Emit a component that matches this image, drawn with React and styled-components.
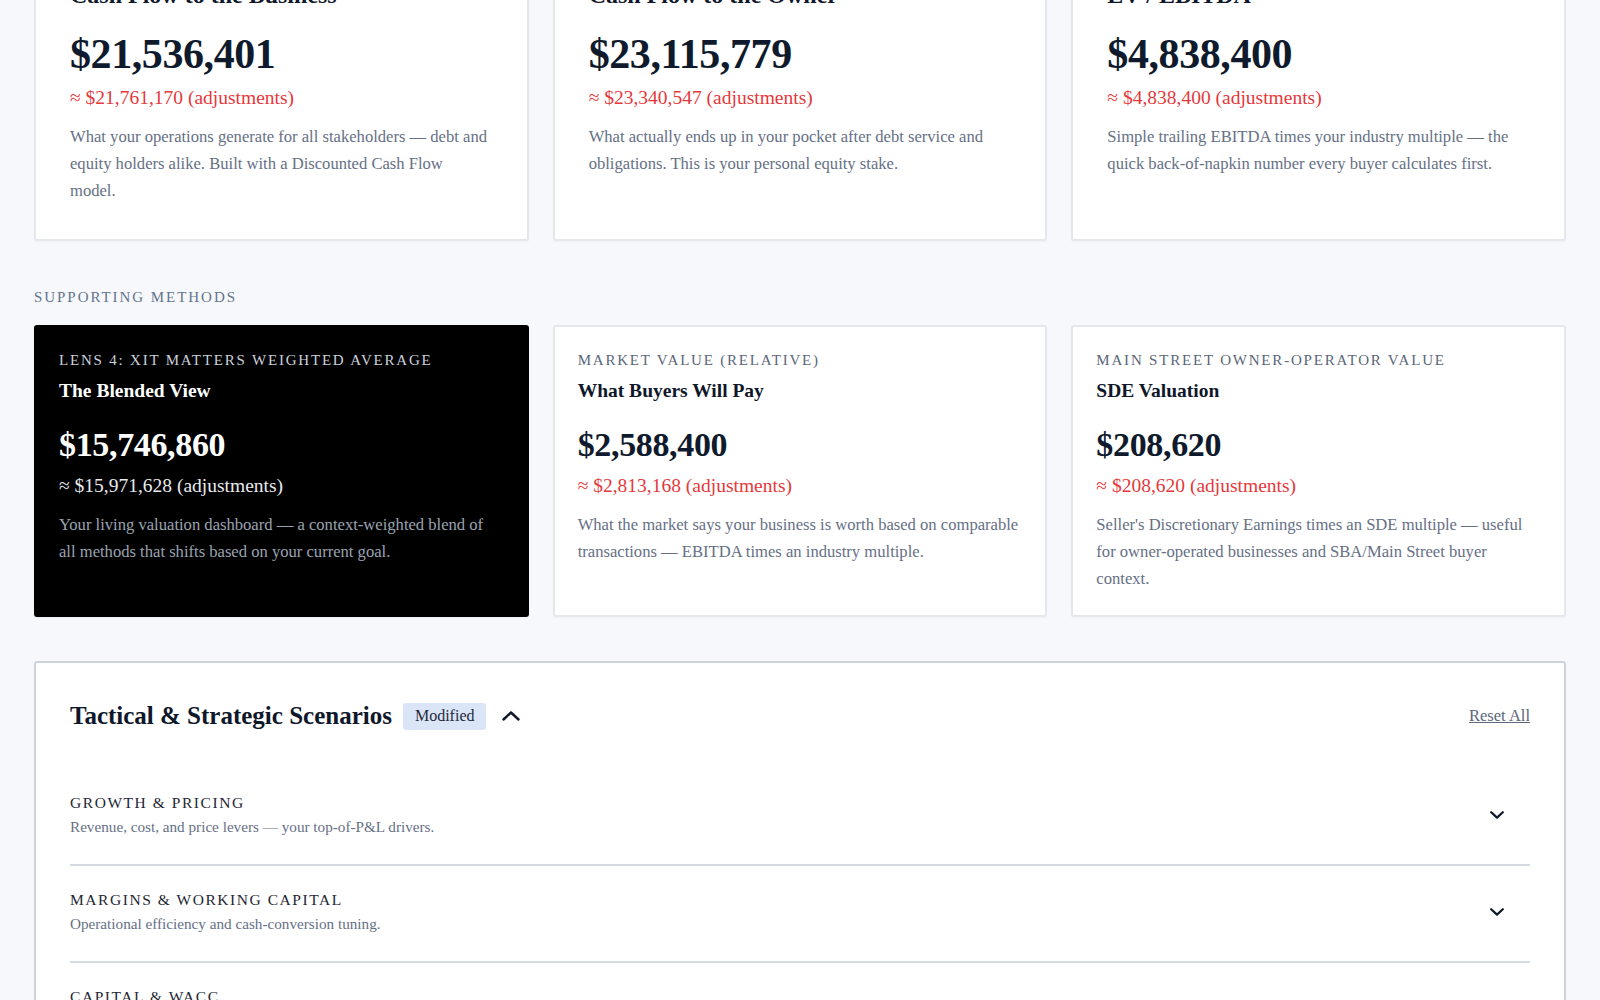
import { useLayoutEffect, useRef } from "react";
import styled, { createGlobalStyle } from "styled-components";

const GlobalStyle = createGlobalStyle`
  * { box-sizing: border-box; }
  html, body { margin: 0; padding: 0; background: #f6f8fc; }
  body { font-family: "Liberation Serif", "Times New Roman", serif; color: #0f172a; }
`;

// SCROLL SHELL
const Scroller = styled.div`
  position: relative;
  height: 100vh;
  overflow-y: auto;
  background: #f6f8fc;
  scrollbar-width: none;
  &::-webkit-scrollbar { display: none; }
`;
const Page = styled.main`
  display: flex;
  flex-direction: column;
  padding: 40px 34px 80px;
`;
const PageTitle = styled.h1`
  margin: 0 0 8px;
  font-size: 32px;
  font-weight: 700;
  color: #0f172a;
`;
const SectionLabel = styled.div`
  font-size: 15px;
  line-height: 20px;
  letter-spacing: 0.13em;
  text-transform: uppercase;
  color: #64748b;
  margin: ${(p) => p.$top || 0}px 0 18px;
`;
const Grid = styled.div`
  display: grid;
  grid-template-columns: repeat(3, 1fr);
  gap: 24px;
`;

// CARDS
const Card = styled.div`
  display: flex;
  flex-direction: column;
  background: ${(p) => (p.$dark ? "#000" : "#fff")};
  border: 2px solid ${(p) => (p.$dark ? "#000" : "#e4e7ec")};
  border-radius: 3px;
  padding: ${(p) => (p.$primary ? "33px 36.5px 35px 34px" : "23px 23px 23px")};
  box-shadow: 0 1px 2px rgba(15, 23, 42, 0.04);
`;
const Eyebrow = styled.div`
  font-size: 15px;
  line-height: 20px;
  letter-spacing: 0.12em;
  text-transform: uppercase;
  color: ${(p) => (p.$dark ? "#cbd2dc" : "#5b6678")};
`;
const CardTitle = styled.div`
  margin-top: ${(p) => (p.$primary ? "6px" : "8px")};
  font-size: ${(p) => (p.$primary ? "24px" : "19.5px")};
  line-height: ${(p) => (p.$primary ? "31px" : "26px")};
  font-weight: 700;
  color: ${(p) => (p.$dark ? "#fff" : "#0f172a")};
`;
const BigNumber = styled.div`
  margin-top: ${(p) => (p.$primary ? "18px" : "20px")};
  font-size: ${(p) => (p.$primary ? "42px" : "34px")};
  line-height: ${(p) => (p.$primary ? "50px" : "41px")};
  font-weight: 700;
  letter-spacing: -0.01em;
  color: ${(p) => (p.$dark ? "#fff" : "#0f1b2d")};
`;
const Adjusted = styled.div`
  margin-top: ${(p) => (p.$primary ? "6px" : "8px")};
  font-size: 19.5px;
  line-height: 26px;
  color: ${(p) => (p.$dark ? "#e8eaee" : "#e5383b")};
`;
const Description = styled.p`
  margin: 12px 0 0;
  font-size: 16.6px;
  line-height: 27px;
  color: ${(p) => (p.$dark ? "#9aa3b1" : "#667085")};
`;

// SCENARIOS
const Panel = styled.section`
  margin-top: 44px;
  background: #fff;
  border: 2px solid #cdd3db;
  border-radius: 3px;
  padding: 37px 34px 20px 34px;
`;
const PanelHeader = styled.div`
  display: flex;
  align-items: center;
  height: 32px;
`;
const PanelTitle = styled.h2`
  margin: 0;
  font-size: 25px;
  font-weight: 700;
  color: #0f172a;
`;
const Badge = styled.span`
  display: inline-flex;
  align-items: center;
  height: 27px;
  margin-left: 11px;
  padding: 0 12px;
  border-radius: 3px;
  background: #dbe5f8;
  font-size: 16px;
  color: #1f2937;
`;
const ToggleButton = styled.button`
  display: inline-flex;
  align-items: center;
  margin-left: 16px;
  padding: 0;
  border: 0;
  background: none;
  color: #0f172a;
  cursor: pointer;
`;
const ResetLink = styled.a`
  margin-left: auto;
  font-size: 16.5px;
  color: #5b6678;
  text-decoration: underline;
  cursor: pointer;
`;
const GroupList = styled.div`
  margin-top: 37px;
  display: flex;
  flex-direction: column;
`;
const GroupRow = styled.div`
  display: flex;
  align-items: center;
  padding: 24px 0 27px;
  border-bottom: 2px solid #d5dae1;
`;
const GroupText = styled.div`
  flex: 1;
`;
const GroupName = styled.div`
  font-size: 15.5px;
  line-height: 20px;
  letter-spacing: 0.1em;
  text-transform: uppercase;
  color: #1e2633;
`;
const GroupHint = styled.div`
  margin-top: 4px;
  font-size: 15.2px;
  line-height: 20px;
  color: #667085;
`;
const Chevron = styled.span`
  display: inline-flex;
  margin-right: 26px;
  color: #0f172a;
`;

const ChevronUpIcon = () => (
  <svg width="18" height="10" viewBox="0 0 18 10" fill="none">
    <polyline points="1.5,8.5 9,1.5 16.5,8.5" stroke="currentColor" strokeWidth="2.4" strokeLinecap="round" strokeLinejoin="round" />
  </svg>
);
const ChevronDownIcon = () => (
  <svg width="14" height="8" viewBox="0 0 14 8" fill="none">
    <polyline points="1.2,1.2 7,6.6 12.8,1.2" stroke="currentColor" strokeWidth="2.2" strokeLinecap="round" strokeLinejoin="round" />
  </svg>
);

const primaryLenses = [
  {
    eyebrow: "Lens 1: Intrinsic Value (DCF)",
    title: "Cash Flow to the Business",
    value: "$21,536,401",
    adjusted: "≈ $21,761,170 (adjustments)",
    text: "What your operations generate for all stakeholders — debt and equity holders alike. Built with a Discounted Cash Flow model.",
  },
  {
    eyebrow: "Lens 2: Equity Value",
    title: "Cash Flow to the Owner",
    value: "$23,115,779",
    adjusted: "≈ $23,340,547 (adjustments)",
    text: "What actually ends up in your pocket after debt service and obligations. This is your personal equity stake.",
  },
  {
    eyebrow: "Lens 3: Quick Multiple",
    title: "EV / EBITDA",
    value: "$4,838,400",
    adjusted: "≈ $4,838,400 (adjustments)",
    text: "Simple trailing EBITDA times your industry multiple — the quick back-of-napkin number every buyer calculates first.",
  },
];

const supportingMethods = [
  {
    dark: true,
    eyebrow: "Lens 4: XIT Matters Weighted Average",
    title: "The Blended View",
    value: "$15,746,860",
    adjusted: "≈ $15,971,628 (adjustments)",
    text: "Your living valuation dashboard — a context-weighted blend of all methods that shifts based on your current goal.",
  },
  {
    eyebrow: "Market Value (Relative)",
    title: "What Buyers Will Pay",
    value: "$2,588,400",
    adjusted: "≈ $2,813,168 (adjustments)",
    text: "What the market says your business is worth based on comparable transactions — EBITDA times an industry multiple.",
  },
  {
    eyebrow: "Main Street Owner-Operator Value",
    title: "SDE Valuation",
    value: "$208,620",
    adjusted: "≈ $208,620 (adjustments)",
    text: "Seller's Discretionary Earnings times an SDE multiple — useful for owner-operated businesses and SBA/Main Street buyer context.",
  },
];

const scenarioGroups = [
  { name: "Growth & Pricing", hint: "Revenue, cost, and price levers — your top-of-P&L drivers." },
  { name: "Margins & Working Capital", hint: "Operational efficiency and cash-conversion tuning." },
  { name: "Capital & WACC", hint: "Discount rate, leverage and cost-of-capital assumptions." },
  { name: "Exit & Deal Structure", hint: "Timing, earn-outs and terms that shape what you take home." },
];

const ValuationCard = ({ item, primary }) => (
  <Card $dark={item.dark} $primary={primary}>
    <Eyebrow $dark={item.dark}>{item.eyebrow}</Eyebrow>
    <CardTitle $dark={item.dark} $primary={primary}>{item.title}</CardTitle>
    <BigNumber $dark={item.dark} $primary={primary}>{item.value}</BigNumber>
    <Adjusted $dark={item.dark} $primary={primary}>{item.adjusted}</Adjusted>
    <Description $dark={item.dark}>{item.text}</Description>
  </Card>
);

const App = () => {
  const scrollerRef = useRef(null);
  const lensesRef = useRef(null);

  // page is viewed scrolled down so the primary lens titles sit at the top edge
  useLayoutEffect(() => {
    if (scrollerRef.current && lensesRef.current) {
      scrollerRef.current.scrollTop = lensesRef.current.offsetTop + 81;
    }
  }, []);

  return (
    <Scroller ref={scrollerRef}>
      <GlobalStyle />
      <Page>
        <PageTitle>Valuation Overview</PageTitle>
        <SectionLabel $top={16}>Primary Lenses</SectionLabel>
        <Grid ref={lensesRef}>
          {primaryLenses.map((item) => (
            <ValuationCard key={item.title} item={item} primary />
          ))}
        </Grid>

        <SectionLabel $top={46}>Supporting Methods</SectionLabel>
        <Grid>
          {supportingMethods.map((item) => (
            <ValuationCard key={item.title} item={item} />
          ))}
        </Grid>

        <Panel>
          <PanelHeader>
            <PanelTitle>Tactical &amp; Strategic Scenarios</PanelTitle>
            <Badge>Modified</Badge>
            <ToggleButton aria-label="Collapse">
              <ChevronUpIcon />
            </ToggleButton>
            <ResetLink>Reset All</ResetLink>
          </PanelHeader>
          <GroupList>
            {scenarioGroups.map((g) => (
              <GroupRow key={g.name}>
                <GroupText>
                  <GroupName>{g.name}</GroupName>
                  <GroupHint>{g.hint}</GroupHint>
                </GroupText>
                <Chevron>
                  <ChevronDownIcon />
                </Chevron>
              </GroupRow>
            ))}
          </GroupList>
        </Panel>
      </Page>
    </Scroller>
  );
};

export default App;
